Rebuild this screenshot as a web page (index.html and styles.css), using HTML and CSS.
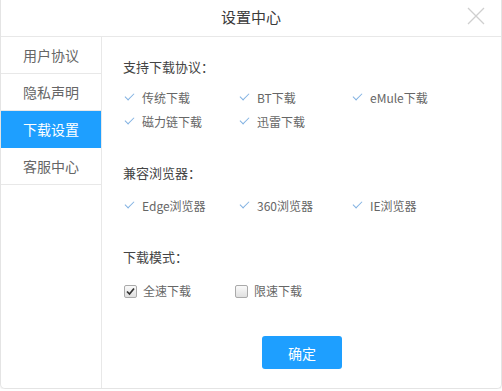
FILE: index.html
```html
<!DOCTYPE html>
<html lang="zh">
<head>
<meta charset="utf-8">
<link rel="stylesheet" href="styles.css">
</head>
<body>
<div class="dialog">
  <div class="header">
    <span class="title">设置中心</span>
    <span class="close"><svg width="18" height="18" viewBox="0 0 18 18"><path d="M1 1L17 17M17 1L1 17" stroke="#cfcfcf" stroke-width="1.3" fill="none"/></svg></span>
  </div>
  <div class="body">
    <ul class="side">
      <li class="nav">用户协议</li>
      <li class="nav">隐私声明</li>
      <li class="nav active">下载设置</li>
      <li class="nav">客服中心</li>
    </ul>
    <div class="content">
      <div class="sec sec1">
        <div class="sec-title">支持下载协议：</div>
        <div class="grid">
          <div class="opt"><span class="tick"></span>传统下载</div>
          <div class="opt"><span class="tick"></span>BT下载</div>
          <div class="opt"><span class="tick"></span>eMule下载</div>
          <div class="opt"><span class="tick"></span>磁力链下载</div>
          <div class="opt"><span class="tick"></span>迅雷下载</div>
        </div>
      </div>
      <div class="sec sec2">
        <div class="sec-title">兼容浏览器：</div>
        <div class="grid">
          <div class="opt"><span class="tick"></span>Edge浏览器</div>
          <div class="opt"><span class="tick"></span>360浏览器</div>
          <div class="opt"><span class="tick"></span>IE浏览器</div>
        </div>
      </div>
      <div class="sec sec3">
        <div class="sec-title">下载模式：</div>
        <div class="modes">
          <label class="mode"><span class="box checked"><svg width="9" height="9" viewBox="0 0 9 9"><path d="M1 4.5L3.5 7L8 1.5" stroke="#333" stroke-width="1.7" fill="none"/></svg></span>全速下载</label>
          <label class="mode"><span class="box"></span>限速下载</label>
        </div>
      </div>
      <div class="actions"><button class="ok">确定</button></div>
    </div>
  </div>
</div>
</body>
</html>
```
FILE: styles.css
```css
* { box-sizing: border-box; }
html, body { margin: 0; padding: 0; background: #fff; }
body {
  font-family: "Noto Sans CJK SC", "Microsoft YaHei", "Noto Sans", sans-serif;
  color: #333;
}
.dialog {
  width: 502px;
  height: 389px;
  border: 1px solid #e4e4e4;
  border-top: none;
  border-radius: 0 0 5px 5px;
  box-shadow: 0 1px 2px rgba(0,0,0,0.08);
  display: flex;
  flex-direction: column;
  overflow: hidden;
}
.header {
  height: 37px;
  border-bottom: 1px solid #e8e8e8;
  display: flex;
  align-items: center;
  justify-content: center;
  position: relative;
}
.title { font-size: 15px; color: #3a3a3a; line-height: 20px; margin-top: -2px; }
.close { position: absolute; right: 16px; top: 7px; width: 18px; height: 18px; display: block; }
.close svg { display: block; }
.body { flex: 1; display: flex; }
.side {
  list-style: none;
  margin: 0;
  padding: 0;
  width: 101px;
  border-right: 1px solid #e8e8e8;
}
.nav {
  height: 37px;
  border-bottom: 1px solid #e8e8e8;
  display: flex;
  align-items: center;
  justify-content: center;
  font-size: 14px;
  color: #666;
}
.nav.active { background: #1e9fff; color: #fff; border-bottom-color: #1e9fff; }
.content { flex: 1; padding: 20px 0 0 21px; display: flex; flex-direction: column; }
.sec-title { font-size: 13px; line-height: 20px; color: #444; }
.grid {
  display: grid;
  grid-template-columns: 115px 113px auto;
  grid-auto-rows: 24px;
  margin-top: 8px;
}
.opt { display: flex; align-items: center; font-size: 12px; color: #666; }
.tick {
  width: 9px; height: 5px;
  border-left: 1.3px solid #82b2e2;
  border-bottom: 1.3px solid #82b2e2;
  transform: rotate(-45deg);
  margin: -3px 8px 0 2px;
}
.sec2 { margin-top: 30px; }
.sec2 .grid { margin-top: 10px; }
.sec3 { margin-top: 30px; }
.modes { display: flex; margin-top: 14px; }
.mode { display: flex; align-items: center; font-size: 12px; color: #666; line-height: 20px; }
.mode:first-child { width: 111px; }
.box {
  width: 13px; height: 13px;
  border: 1px solid #aaa;
  border-radius: 2px;
  background: linear-gradient(#fafafa, #e0e0e0);
  margin: 0 6px 0 1px;
  display: flex; align-items: center; justify-content: center;
}
.box svg { display: block; }
.actions { display: flex; justify-content: center; margin-top: 35px; padding-right: 20px; }
.ok {
  width: 80px; height: 33px;
  border: none; border-radius: 3px;
  background: #1e9fff; color: #fff;
  font-family: inherit; font-size: 14px;
  padding: 0;
}
```
